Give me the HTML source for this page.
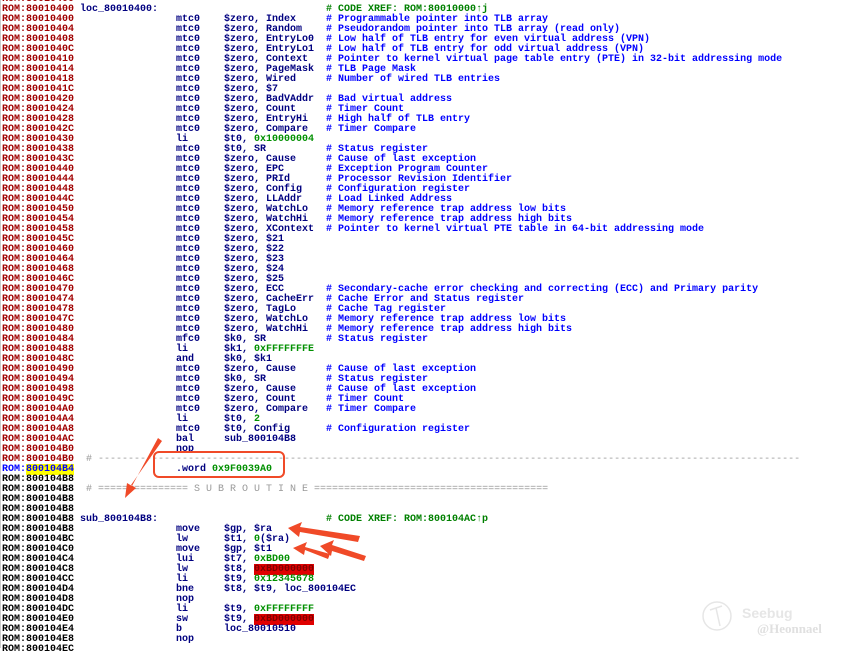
<!DOCTYPE html>
<html><head><meta charset="utf-8"><style>
body{margin:0;width:848px;height:648px;background:#fff;overflow:hidden;position:relative;font-family:"Liberation Mono",monospace;font-weight:bold;font-size:10px;}
.r{position:absolute;left:0;height:10px;line-height:10px;width:848px;white-space:pre;}
.r span{position:absolute;top:0;}
.a{left:2px;color:#a00000}
.k{color:#000}
.l{left:80px;color:#000080}
.m{left:176px;color:#000080}
.o{left:224px;color:#000080}
.c{left:326px;color:#0000ff}
.g{color:#008000}
.n{color:#009000}
.red{background:#e00000;color:#800000}
.sep{left:86px;color:#999;font-weight:normal}
#bl{position:absolute;left:0;top:0;width:1px;height:648px;background:#ccc}
</style></head><body>
<div id="bl"></div>
<div class="r" style="top:-5px"><span class="a">ROM:80010400</span></div>
<div class="r" style="top:5px"><span class="a">ROM:80010400</span><span class="l">loc_80010400:</span><span class="c g"># CODE XREF: ROM:80010000↑j</span></div>
<div class="r" style="top:15px"><span class="a">ROM:80010400</span><span class="m">mtc0</span><span class="o">$zero, Index</span><span class="c"># Programmable pointer into TLB array</span></div>
<div class="r" style="top:25px"><span class="a">ROM:80010404</span><span class="m">mtc0</span><span class="o">$zero, Random</span><span class="c"># Pseudorandom pointer into TLB array (read only)</span></div>
<div class="r" style="top:35px"><span class="a">ROM:80010408</span><span class="m">mtc0</span><span class="o">$zero, EntryLo0</span><span class="c"># Low half of TLB entry for even virtual address (VPN)</span></div>
<div class="r" style="top:45px"><span class="a">ROM:8001040C</span><span class="m">mtc0</span><span class="o">$zero, EntryLo1</span><span class="c"># Low half of TLB entry for odd virtual address (VPN)</span></div>
<div class="r" style="top:55px"><span class="a">ROM:80010410</span><span class="m">mtc0</span><span class="o">$zero, Context</span><span class="c"># Pointer to kernel virtual page table entry (PTE) in 32-bit addressing mode</span></div>
<div class="r" style="top:65px"><span class="a">ROM:80010414</span><span class="m">mtc0</span><span class="o">$zero, PageMask</span><span class="c"># TLB Page Mask</span></div>
<div class="r" style="top:75px"><span class="a">ROM:80010418</span><span class="m">mtc0</span><span class="o">$zero, Wired</span><span class="c"># Number of wired TLB entries</span></div>
<div class="r" style="top:85px"><span class="a">ROM:8001041C</span><span class="m">mtc0</span><span class="o">$zero, $7</span></div>
<div class="r" style="top:95px"><span class="a">ROM:80010420</span><span class="m">mtc0</span><span class="o">$zero, BadVAddr</span><span class="c"># Bad virtual address</span></div>
<div class="r" style="top:105px"><span class="a">ROM:80010424</span><span class="m">mtc0</span><span class="o">$zero, Count</span><span class="c"># Timer Count</span></div>
<div class="r" style="top:115px"><span class="a">ROM:80010428</span><span class="m">mtc0</span><span class="o">$zero, EntryHi</span><span class="c"># High half of TLB entry</span></div>
<div class="r" style="top:125px"><span class="a">ROM:8001042C</span><span class="m">mtc0</span><span class="o">$zero, Compare</span><span class="c"># Timer Compare</span></div>
<div class="r" style="top:135px"><span class="a">ROM:80010430</span><span class="m">li</span><span class="o">$t0, <b class="n">0x10000004</b></span></div>
<div class="r" style="top:145px"><span class="a">ROM:80010438</span><span class="m">mtc0</span><span class="o">$t0, SR</span><span class="c"># Status register</span></div>
<div class="r" style="top:155px"><span class="a">ROM:8001043C</span><span class="m">mtc0</span><span class="o">$zero, Cause</span><span class="c"># Cause of last exception</span></div>
<div class="r" style="top:165px"><span class="a">ROM:80010440</span><span class="m">mtc0</span><span class="o">$zero, EPC</span><span class="c"># Exception Program Counter</span></div>
<div class="r" style="top:175px"><span class="a">ROM:80010444</span><span class="m">mtc0</span><span class="o">$zero, PRId</span><span class="c"># Processor Revision Identifier</span></div>
<div class="r" style="top:185px"><span class="a">ROM:80010448</span><span class="m">mtc0</span><span class="o">$zero, Config</span><span class="c"># Configuration register</span></div>
<div class="r" style="top:195px"><span class="a">ROM:8001044C</span><span class="m">mtc0</span><span class="o">$zero, LLAddr</span><span class="c"># Load Linked Address</span></div>
<div class="r" style="top:205px"><span class="a">ROM:80010450</span><span class="m">mtc0</span><span class="o">$zero, WatchLo</span><span class="c"># Memory reference trap address low bits</span></div>
<div class="r" style="top:215px"><span class="a">ROM:80010454</span><span class="m">mtc0</span><span class="o">$zero, WatchHi</span><span class="c"># Memory reference trap address high bits</span></div>
<div class="r" style="top:225px"><span class="a">ROM:80010458</span><span class="m">mtc0</span><span class="o">$zero, XContext</span><span class="c"># Pointer to kernel virtual PTE table in 64-bit addressing mode</span></div>
<div class="r" style="top:235px"><span class="a">ROM:8001045C</span><span class="m">mtc0</span><span class="o">$zero, $21</span></div>
<div class="r" style="top:245px"><span class="a">ROM:80010460</span><span class="m">mtc0</span><span class="o">$zero, $22</span></div>
<div class="r" style="top:255px"><span class="a">ROM:80010464</span><span class="m">mtc0</span><span class="o">$zero, $23</span></div>
<div class="r" style="top:265px"><span class="a">ROM:80010468</span><span class="m">mtc0</span><span class="o">$zero, $24</span></div>
<div class="r" style="top:275px"><span class="a">ROM:8001046C</span><span class="m">mtc0</span><span class="o">$zero, $25</span></div>
<div class="r" style="top:285px"><span class="a">ROM:80010470</span><span class="m">mtc0</span><span class="o">$zero, ECC</span><span class="c"># Secondary-cache error checking and correcting (ECC) and Primary parity</span></div>
<div class="r" style="top:295px"><span class="a">ROM:80010474</span><span class="m">mtc0</span><span class="o">$zero, CacheErr</span><span class="c"># Cache Error and Status register</span></div>
<div class="r" style="top:305px"><span class="a">ROM:80010478</span><span class="m">mtc0</span><span class="o">$zero, TagLo</span><span class="c"># Cache Tag register</span></div>
<div class="r" style="top:315px"><span class="a">ROM:8001047C</span><span class="m">mtc0</span><span class="o">$zero, WatchLo</span><span class="c"># Memory reference trap address low bits</span></div>
<div class="r" style="top:325px"><span class="a">ROM:80010480</span><span class="m">mtc0</span><span class="o">$zero, WatchHi</span><span class="c"># Memory reference trap address high bits</span></div>
<div class="r" style="top:335px"><span class="a">ROM:80010484</span><span class="m">mfc0</span><span class="o">$k0, SR</span><span class="c"># Status register</span></div>
<div class="r" style="top:345px"><span class="a">ROM:80010488</span><span class="m">li</span><span class="o">$k1, <b class="n">0xFFFFFFFE</b></span></div>
<div class="r" style="top:355px"><span class="a">ROM:8001048C</span><span class="m">and</span><span class="o">$k0, $k1</span></div>
<div class="r" style="top:365px"><span class="a">ROM:80010490</span><span class="m">mtc0</span><span class="o">$zero, Cause</span><span class="c"># Cause of last exception</span></div>
<div class="r" style="top:375px"><span class="a">ROM:80010494</span><span class="m">mtc0</span><span class="o">$k0, SR</span><span class="c"># Status register</span></div>
<div class="r" style="top:385px"><span class="a">ROM:80010498</span><span class="m">mtc0</span><span class="o">$zero, Cause</span><span class="c"># Cause of last exception</span></div>
<div class="r" style="top:395px"><span class="a">ROM:8001049C</span><span class="m">mtc0</span><span class="o">$zero, Count</span><span class="c"># Timer Count</span></div>
<div class="r" style="top:405px"><span class="a">ROM:800104A0</span><span class="m">mtc0</span><span class="o">$zero, Compare</span><span class="c"># Timer Compare</span></div>
<div class="r" style="top:415px"><span class="a">ROM:800104A4</span><span class="m">li</span><span class="o">$t0, <b class="n">2</b></span></div>
<div class="r" style="top:425px"><span class="a">ROM:800104A8</span><span class="m">mtc0</span><span class="o">$t0, Config</span><span class="c"># Configuration register</span></div>
<div class="r" style="top:435px"><span class="a">ROM:800104AC</span><span class="m">bal</span><span class="o">sub_800104B8</span></div>
<div class="r" style="top:445px"><span class="a">ROM:800104B0</span><span class="m">nop</span></div>
<div class="r" style="top:455px"><span class="a">ROM:800104B0</span><span class="sep"># ---------------------------------------------------------------------------------------------------------------------</span></div>
<div class="r" style="top:465px"><span class="a" style="color:#0000ff">ROM:<b style="background:#ffff00">800104B4</b></span><span class="m">.word <b class="n">0x9F0039A0</b></span></div>
<div class="r" style="top:475px"><span class="a k">ROM:800104B8</span></div>
<div class="r" style="top:485px"><span class="a k">ROM:800104B8</span><span class="sep"># =============== S U B R O U T I N E =======================================</span></div>
<div class="r" style="top:495px"><span class="a k">ROM:800104B8</span></div>
<div class="r" style="top:505px"><span class="a k">ROM:800104B8</span></div>
<div class="r" style="top:515px"><span class="a k">ROM:800104B8</span><span class="l">sub_800104B8:</span><span class="c g"># CODE XREF: ROM:800104AC↑p</span></div>
<div class="r" style="top:525px"><span class="a k">ROM:800104B8</span><span class="m">move</span><span class="o">$gp, $ra</span></div>
<div class="r" style="top:535px"><span class="a k">ROM:800104BC</span><span class="m">lw</span><span class="o">$t1, <b class="n">0</b>($ra)</span></div>
<div class="r" style="top:545px"><span class="a k">ROM:800104C0</span><span class="m">move</span><span class="o">$gp, $t1</span></div>
<div class="r" style="top:555px"><span class="a k">ROM:800104C4</span><span class="m">lui</span><span class="o">$t7, <b class="n">0xBD00</b></span></div>
<div class="r" style="top:565px"><span class="a k">ROM:800104C8</span><span class="m">lw</span><span class="o">$t8, <b class="red">0xBD000000</b></span></div>
<div class="r" style="top:575px"><span class="a k">ROM:800104CC</span><span class="m">li</span><span class="o">$t9, <b class="n">0x12345678</b></span></div>
<div class="r" style="top:585px"><span class="a k">ROM:800104D4</span><span class="m">bne</span><span class="o">$t8, $t9, loc_800104EC</span></div>
<div class="r" style="top:595px"><span class="a k">ROM:800104D8</span><span class="m">nop</span></div>
<div class="r" style="top:605px"><span class="a k">ROM:800104DC</span><span class="m">li</span><span class="o">$t9, <b class="n">0xFFFFFFFF</b></span></div>
<div class="r" style="top:615px"><span class="a k">ROM:800104E0</span><span class="m">sw</span><span class="o">$t9, <b class="red">0xBD000000</b></span></div>
<div class="r" style="top:625px"><span class="a k">ROM:800104E4</span><span class="m">b</span><span class="o">loc_80010510</span></div>
<div class="r" style="top:635px"><span class="a k">ROM:800104E8</span><span class="m">nop</span></div>
<div class="r" style="top:645px"><span class="a k">ROM:800104EC</span></div>
<svg style="position:absolute;left:0;top:0" width="848" height="648">
<rect x="154" y="452" width="130" height="25" rx="5" fill="none" stroke="#f04a28" stroke-width="2"/>
<g fill="#f04a28" stroke="none">
<polygon points="158,438 162,441 131,485 136,488 125,498 127,483 132,486"/>
<polygon points="360,536 358,542 300,532 299,537 288,528 302,522 300,527"/>
<polygon points="330,554 328,559 305,550 304,555 293,548 307,542 305,547"/>
<polygon points="366,556 364,561 332,551 331,556 320,546 334,540 332,545"/>
</g>
<g fill="none" stroke="#e6e6e6" stroke-width="1.5">
<circle cx="717" cy="616" r="14"/>
<path d="M710 610 L722 606 M716 608 L720 626"/>
</g>
<text x="742" y="618" font-family="Liberation Sans,sans-serif" font-size="14" fill="#e6e6e6">Seebug</text>
<text x="757" y="633" font-family="Liberation Serif,serif" font-size="13" fill="#e0e0e0">@Heonnael</text>
</svg>
</body></html>
